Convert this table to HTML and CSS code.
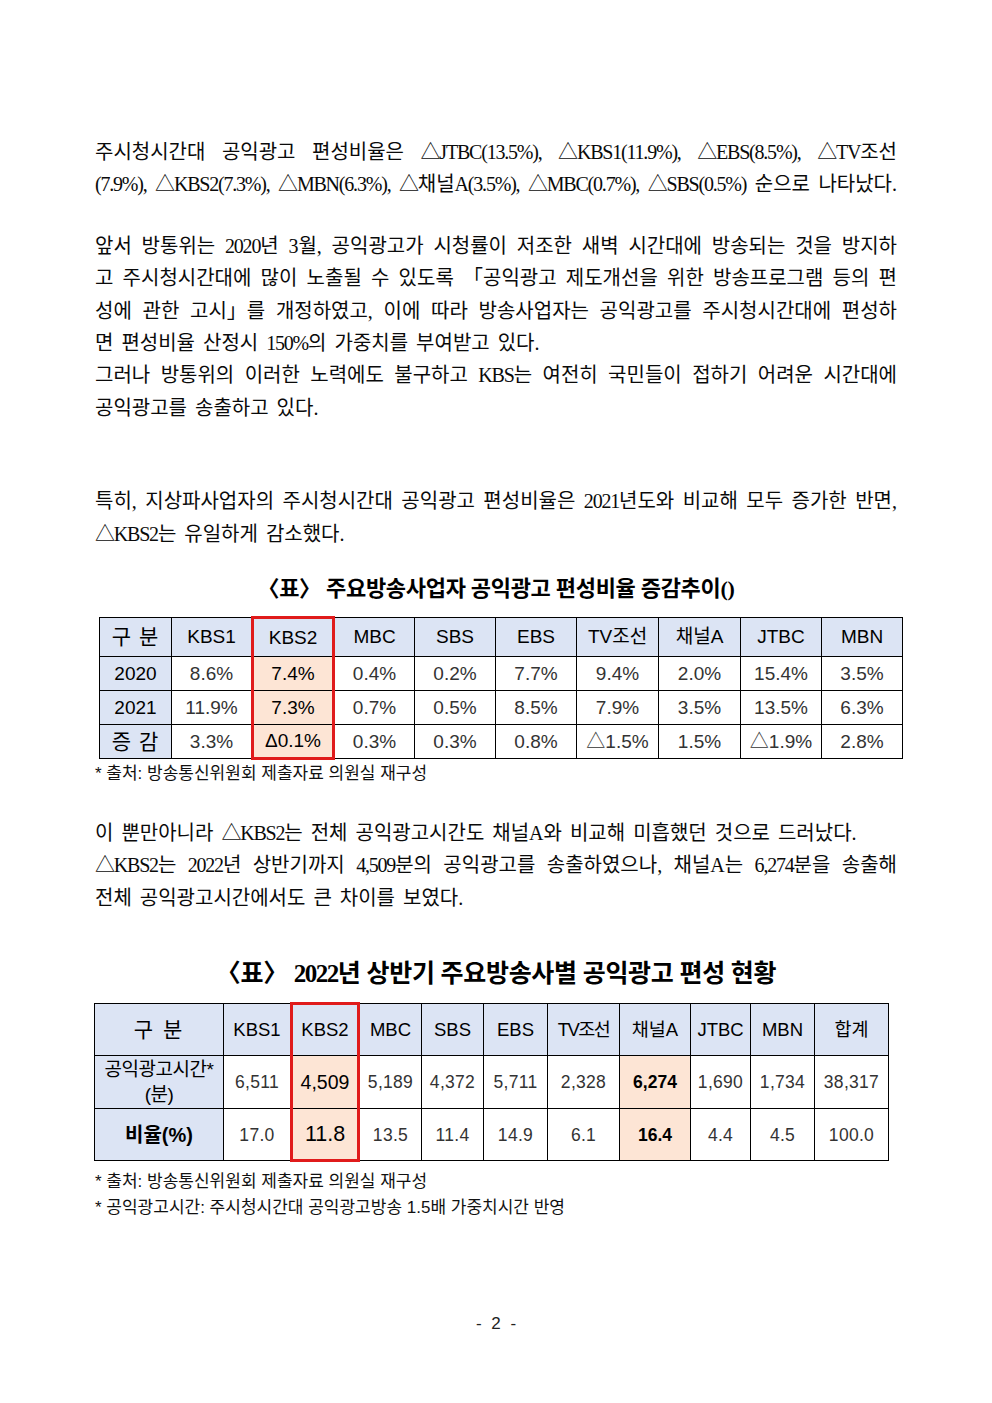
FILE: index.html
```html
<!DOCTYPE html>
<html lang="ko">
<head>
<meta charset="utf-8">
<title>공익광고 편성비율</title>
<link rel="stylesheet" href="styles.css">
</head>
<body>
<div class="page">
  <div class="txt p1">
    <div class="j">주시청시간대 공익광고 편성비율은 <span class="nb l">△JTBC(13.5%),</span> <span class="nb l">△KBS1(11.9%),</span> <span class="nb l">△EBS(8.5%),</span> <span class="nb"><span class="l">△TV</span>조선</span></div>
    <div class="j"><span class="nb l">(7.9%),</span> <span class="nb l">△KBS2(7.3%),</span> <span class="nb l">△MBN(6.3%),</span> <span class="nb"><span class="l">△</span>채널<span class="l">A(3.5%),</span></span> <span class="nb l">△MBC(0.7%),</span> <span class="nb l">△SBS(0.5%)</span> 순으로 나타났다.</div>
  </div>
  <div class="txt p2">
    <div class="j">앞서 방통위는 <span class="l">2020</span>년 3월, 공익광고가 시청률이 저조한 새벽 시간대에 방송되는 것을 방지하</div>
    <div class="j">고 주시청시간대에 많이 노출될 수 있도록 <span class="nb">「공익광고</span> 제도개선을 위한 방송프로그램 등의 편</div>
    <div class="j">성에 관한 <span class="nb">고시」를</span> 개정하였고, 이에 따라 방송사업자는 공익광고를 주시청시간대에 편성하</div>
    <div>면 편성비율 산정시 <span class="l">150%</span>의 가중치를 부여받고 있다.</div>
    <div class="j">그러나 방통위의 이러한 노력에도 불구하고 <span class="l">KBS</span>는 여전히 국민들이 접하기 어려운 시간대에</div>
    <div>공익광고를 송출하고 있다.</div>
  </div>
  <div class="txt p3">
    <div class="j">특히, 지상파사업자의 주시청시간대 공익광고 편성비율은 <span class="l">2021</span>년도와 비교해 모두 증가한 반면,</div>
    <div><span class="nb"><span class="l">△KBS2</span>는</span> 유일하게 감소했다.</div>
  </div>

  <h2 class="title t1">〈표〉 주요방송사업자 공익광고 편성비율 증감추이()</h2>
  <table class="tbl tbl1">
    <colgroup>
      <col class="c72"><col class="c81"><col class="c81"><col class="c81"><col class="c81"><col class="c81"><col class="c82"><col class="c82"><col class="c81"><col class="c81">
    </colgroup>
    <tr class="r39 hd">
      <td class="lbl gubun">구 분</td><td>KBS1</td><td class="hl hl-top">KBS2</td><td>MBC</td><td>SBS</td><td>EBS</td><td>TV조선</td><td>채널A</td><td>JTBC</td><td>MBN</td>
    </tr>
    <tr class="r34 dt">
      <td class="lbl">2020</td><td>8.6%</td><td class="hl pe strong">7.4%</td><td>0.4%</td><td>0.2%</td><td>7.7%</td><td>9.4%</td><td>2.0%</td><td>15.4%</td><td>3.5%</td>
    </tr>
    <tr class="r34 dt">
      <td class="lbl">2021</td><td>11.9%</td><td class="hl pe strong">7.3%</td><td>0.7%</td><td>0.5%</td><td>8.5%</td><td>7.9%</td><td>3.5%</td><td>13.5%</td><td>6.3%</td>
    </tr>
    <tr class="r34 dt">
      <td class="lbl gubun">증 감</td><td>3.3%</td><td class="hl hl-bot pe strong">Δ0.1%</td><td>0.3%</td><td>0.3%</td><td>0.8%</td><td>△1.5%</td><td>1.5%</td><td>△1.9%</td><td>2.8%</td>
    </tr>
  </table>
  <p class="note n1">* 출처: 방송통신위원회 제출자료 의원실 재구성</p>

  <div class="txt p4">
    <div>이 뿐만아니라 <span class="nb"><span class="l">△KBS2</span>는</span> 전체 공익광고시간도 채널A와 비교해 미흡했던 것으로 드러났다.</div>
    <div class="j"><span class="nb"><span class="l">△KBS2</span>는</span> <span class="l">2022</span>년 상반기까지 <span class="l">4,509</span>분의 공익광고를 송출하였으나, 채널A는 <span class="l">6,274</span>분을 송출해</div>
    <div>전체 공익광고시간에서도 큰 차이를 보였다.</div>
  </div>

  <h2 class="title t2">〈표〉 <span class="tl">2022</span>년 상반기 주요방송사별 공익광고 편성 현황</h2>
  <table class="tbl tbl2">
    <colgroup>
      <col class="w129"><col class="w68"><col class="w67"><col class="w63"><col class="w62"><col class="w64"><col class="w72"><col class="w71"><col class="w60"><col class="w64"><col class="w74">
    </colgroup>
    <tr class="r52 hd">
      <td class="lbl gubun2">구 분</td><td>KBS1</td><td class="hl hl-top">KBS2</td><td>MBC</td><td>SBS</td><td>EBS</td><td class="tight">TV조선</td><td>채널A</td><td>JTBC</td><td>MBN</td><td>합계</td>
    </tr>
    <tr class="r53 d2">
      <td class="lbl two">공익광고시간*<br>(분)</td><td>6,511</td><td class="hl pe big">4,509</td><td>5,189</td><td>4,372</td><td>5,711</td><td>2,328</td><td class="pe bold">6,274</td><td>1,690</td><td>1,734</td><td>38,317</td>
    </tr>
    <tr class="r52 d2">
      <td class="lbl ratio">비율(%)</td><td>17.0</td><td class="hl hl-bot pe bigger">11.8</td><td>13.5</td><td>11.4</td><td>14.9</td><td>6.1</td><td class="pe bold">16.4</td><td>4.4</td><td>4.5</td><td>100.0</td>
    </tr>
  </table>
  <p class="note n2">* 출처: 방송통신위원회 제출자료 의원실 재구성</p>
  <p class="note n3">* 공익광고시간: 주시청시간대 공익광고방송 1.5배 가중치시간 반영</p>

  <p class="pagenum">- 2 -</p>
</div>
</body>
</html>
```

FILE: styles.css
```css
html, body {
  margin: 0;
  padding: 0;
  background: #ffffff;
  color: #000000;
}

.page {
  width: 802px;
  padding: 136px 0 60px 95px;
}

.txt {
  font-family: "Liberation Serif", "Noto Sans CJK KR", serif;
  font-size: 20px;
  line-height: 32.4px;
  letter-spacing: 0;
  word-spacing: 3px;
  color: #0a0a0a;
}

.l {
  letter-spacing: -1.2px;
}

.nb {
  display: inline-block;
}

.j {
  text-align: justify;
  text-align-last: justify;
}

.p2 { margin-top: 29px; }
.p3 { margin-top: 61px; }
.p4 { margin-top: 33px; }

.title {
  margin: 0;
  text-align: center;
  font-family: "Liberation Serif", "Noto Sans CJK KR", serif;
  font-weight: bold;
  color: #000;
}

.t1 {
  margin-top: 24px;
  font-size: 22px;
  line-height: 30px;
  letter-spacing: -0.3px;
}

.t2 {
  margin-top: 44px;
  font-size: 25px;
  line-height: 32px;
  letter-spacing: -0.3px;
}

.tl {
  letter-spacing: -1.5px;
}

.tbl {
  border-collapse: collapse;
  table-layout: fixed;
  font-family: "Liberation Sans", "Noto Sans CJK KR", sans-serif;
  color: #222;
}

.tbl td {
  border: 1px solid #000;
  padding: 0;
  text-align: center;
  vertical-align: middle;
  white-space: nowrap;
  overflow: visible;
  line-height: 22px;
}

.tbl1 {
  width: 803px;
  margin-top: 12px;
  margin-left: 4px;
  font-size: 19px;
}

.dt td {
  color: #333;
}

.c72 { width: 72px; }
.c81 { width: 81px; }
.c82 { width: 82px; }

.r39 { height: 39px; }
.r34 { height: 34px; }
.r52 { height: 52px; }
.r53 { height: 53px; }

.hd td {
  background: #dce4f4;
  color: #000;
}

.tbl td.lbl {
  background: #dce4f4;
  color: #000;
}

.gubun {
  font-size: 21px;
  letter-spacing: 1px;
}

.tbl td.pe {
  background: #fde5d5;
}

.tbl td.strong {
  color: #000;
}

.tbl .hl {
  border-left: 3px solid #e01b1b;
  border-right: 3px solid #e01b1b;
}

.tbl .hl-top {
  border-top: 3px solid #e01b1b;
}

.tbl .hl-bot {
  border-bottom: 3px solid #e01b1b;
}

.note {
  margin: 0;
  font-family: "Liberation Sans", "Noto Sans CJK KR", sans-serif;
  font-size: 17px;
  line-height: 20px;
  letter-spacing: 0;
  color: #111;
}

.n1 { margin-top: 4px; }
.n2 { margin-top: 7px; line-height: 26px; }
.n3 { line-height: 26px; }

.tbl2 {
  width: 794px;
  margin-top: 12px;
  margin-left: -1px;
  font-size: 18.5px;
}

.w129 { width: 129px; }
.w68 { width: 68px; }
.w67 { width: 67px; }
.w63 { width: 63px; }
.w62 { width: 62px; }
.w64 { width: 64px; }
.w72 { width: 72px; }
.w71 { width: 71px; }
.w60 { width: 60px; }
.w74 { width: 74px; }

.gubun2 {
  font-size: 21px;
  letter-spacing: 2px;
}

.tight {
  letter-spacing: -1.5px;
}

.d2 td {
  font-size: 17.5px;
  letter-spacing: 0.3px;
  color: #333;
}

.tbl .d2 td.lbl {
  font-size: 19px;
  letter-spacing: -0.5px;
  color: #000;
}

.tbl .d2 td.two {
  line-height: 25px;
}

.tbl .d2 td.ratio {
  font-size: 20px;
  font-weight: bold;
  letter-spacing: 0;
}

.tbl .d2 td.big {
  font-size: 19.5px;
  color: #000;
  letter-spacing: 0;
}

.tbl .d2 td.bigger {
  font-size: 21.5px;
  color: #000;
  letter-spacing: 0;
}

.tbl .d2 td.bold {
  font-weight: bold;
  color: #000;
  letter-spacing: 0;
}

.pagenum {
  margin: 93px 0 0 0;
  text-align: center;
  font-family: "Liberation Sans", "Noto Sans CJK KR", sans-serif;
  font-size: 17px;
  line-height: 20px;
  word-spacing: 5px;
  color: #222;
}
```
